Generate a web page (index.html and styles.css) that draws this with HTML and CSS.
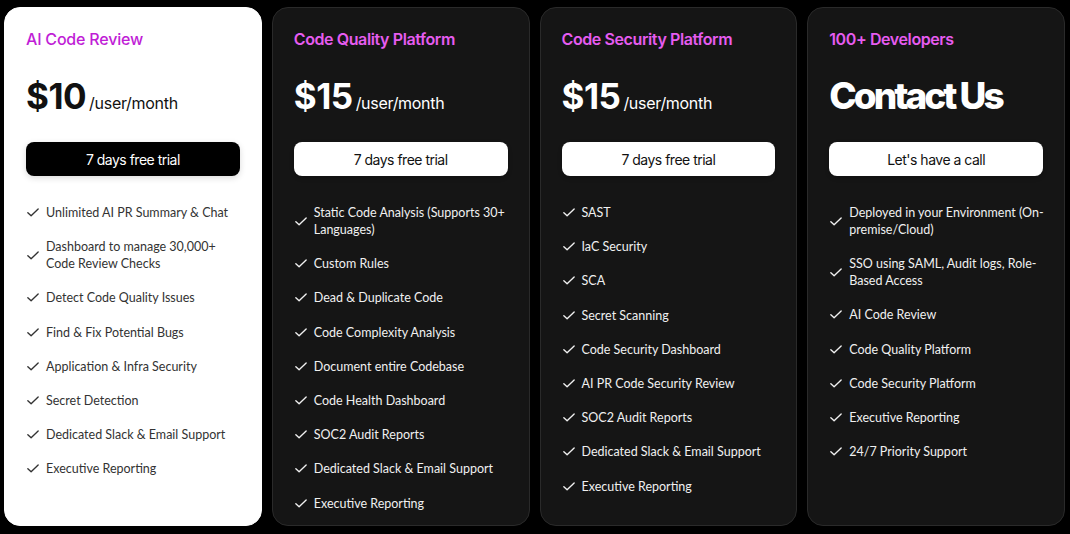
FILE: index.html
```html
<!DOCTYPE html>
<html lang="en">
<head>
    <meta charset="UTF-8">
    <meta name="viewport" content="width=device-width, initial-scale=1.0">
    <title>Pricing</title>
    <link rel="stylesheet" href="styles.css">
</head>
<body>
    <div class="pricing">
        <!-- Plan 1: light card -->
        <div class="plan light">
            <h2 class="plan-name">AI Code Review</h2>
            <div class="price"><span class="amount">$10</span><span class="per">/user/month</span></div>
            <button class="cta">7 days free trial</button>
            <ul class="features">
                <li><svg class="check" viewBox="0 0 14 10"><path d="M1 5.2l3.8 3.6L13 1"/></svg><span>Unlimited AI PR Summary &amp; Chat</span></li>
                <li><svg class="check" viewBox="0 0 14 10"><path d="M1 5.2l3.8 3.6L13 1"/></svg><span>Dashboard to manage 30,000+ Code Review Checks</span></li>
                <li><svg class="check" viewBox="0 0 14 10"><path d="M1 5.2l3.8 3.6L13 1"/></svg><span>Detect Code Quality Issues</span></li>
                <li><svg class="check" viewBox="0 0 14 10"><path d="M1 5.2l3.8 3.6L13 1"/></svg><span>Find &amp; Fix Potential Bugs</span></li>
                <li><svg class="check" viewBox="0 0 14 10"><path d="M1 5.2l3.8 3.6L13 1"/></svg><span>Application &amp; Infra Security</span></li>
                <li><svg class="check" viewBox="0 0 14 10"><path d="M1 5.2l3.8 3.6L13 1"/></svg><span>Secret Detection</span></li>
                <li><svg class="check" viewBox="0 0 14 10"><path d="M1 5.2l3.8 3.6L13 1"/></svg><span>Dedicated Slack &amp; Email Support</span></li>
                <li><svg class="check" viewBox="0 0 14 10"><path d="M1 5.2l3.8 3.6L13 1"/></svg><span>Executive Reporting</span></li>
            </ul>
        </div>

        <!-- Plan 2 -->
        <div class="plan">
            <h2 class="plan-name">Code Quality Platform</h2>
            <div class="price"><span class="amount">$15</span><span class="per">/user/month</span></div>
            <button class="cta">7 days free trial</button>
            <ul class="features">
                <li><svg class="check" viewBox="0 0 14 10"><path d="M1 5.2l3.8 3.6L13 1"/></svg><span>Static Code Analysis (Supports 30+ Languages)</span></li>
                <li><svg class="check" viewBox="0 0 14 10"><path d="M1 5.2l3.8 3.6L13 1"/></svg><span>Custom Rules</span></li>
                <li><svg class="check" viewBox="0 0 14 10"><path d="M1 5.2l3.8 3.6L13 1"/></svg><span>Dead &amp; Duplicate Code</span></li>
                <li><svg class="check" viewBox="0 0 14 10"><path d="M1 5.2l3.8 3.6L13 1"/></svg><span>Code Complexity Analysis</span></li>
                <li><svg class="check" viewBox="0 0 14 10"><path d="M1 5.2l3.8 3.6L13 1"/></svg><span>Document entire Codebase</span></li>
                <li><svg class="check" viewBox="0 0 14 10"><path d="M1 5.2l3.8 3.6L13 1"/></svg><span>Code Health Dashboard</span></li>
                <li><svg class="check" viewBox="0 0 14 10"><path d="M1 5.2l3.8 3.6L13 1"/></svg><span>SOC2 Audit Reports</span></li>
                <li><svg class="check" viewBox="0 0 14 10"><path d="M1 5.2l3.8 3.6L13 1"/></svg><span>Dedicated Slack &amp; Email Support</span></li>
                <li><svg class="check" viewBox="0 0 14 10"><path d="M1 5.2l3.8 3.6L13 1"/></svg><span>Executive Reporting</span></li>
            </ul>
        </div>

        <!-- Plan 3 -->
        <div class="plan">
            <h2 class="plan-name">Code Security Platform</h2>
            <div class="price"><span class="amount">$15</span><span class="per">/user/month</span></div>
            <button class="cta">7 days free trial</button>
            <ul class="features">
                <li><svg class="check" viewBox="0 0 14 10"><path d="M1 5.2l3.8 3.6L13 1"/></svg><span>SAST</span></li>
                <li><svg class="check" viewBox="0 0 14 10"><path d="M1 5.2l3.8 3.6L13 1"/></svg><span>IaC Security</span></li>
                <li><svg class="check" viewBox="0 0 14 10"><path d="M1 5.2l3.8 3.6L13 1"/></svg><span>SCA</span></li>
                <li><svg class="check" viewBox="0 0 14 10"><path d="M1 5.2l3.8 3.6L13 1"/></svg><span>Secret Scanning</span></li>
                <li><svg class="check" viewBox="0 0 14 10"><path d="M1 5.2l3.8 3.6L13 1"/></svg><span>Code Security Dashboard</span></li>
                <li><svg class="check" viewBox="0 0 14 10"><path d="M1 5.2l3.8 3.6L13 1"/></svg><span>AI PR Code Security Review</span></li>
                <li><svg class="check" viewBox="0 0 14 10"><path d="M1 5.2l3.8 3.6L13 1"/></svg><span>SOC2 Audit Reports</span></li>
                <li><svg class="check" viewBox="0 0 14 10"><path d="M1 5.2l3.8 3.6L13 1"/></svg><span>Dedicated Slack &amp; Email Support</span></li>
                <li><svg class="check" viewBox="0 0 14 10"><path d="M1 5.2l3.8 3.6L13 1"/></svg><span>Executive Reporting</span></li>
            </ul>
        </div>

        <!-- Plan 4: enterprise -->
        <div class="plan">
            <h2 class="plan-name">100+ Developers</h2>
            <div class="price"><span class="amount contact">Contact Us</span></div>
            <button class="cta">Let's have a call</button>
            <ul class="features">
                <li><svg class="check" viewBox="0 0 14 10"><path d="M1 5.2l3.8 3.6L13 1"/></svg><span>Deployed in your Environment (On-premise/Cloud)</span></li>
                <li><svg class="check" viewBox="0 0 14 10"><path d="M1 5.2l3.8 3.6L13 1"/></svg><span>SSO using SAML, Audit logs, Role-Based Access</span></li>
                <li><svg class="check" viewBox="0 0 14 10"><path d="M1 5.2l3.8 3.6L13 1"/></svg><span>AI Code Review</span></li>
                <li><svg class="check" viewBox="0 0 14 10"><path d="M1 5.2l3.8 3.6L13 1"/></svg><span>Code Quality Platform</span></li>
                <li><svg class="check" viewBox="0 0 14 10"><path d="M1 5.2l3.8 3.6L13 1"/></svg><span>Code Security Platform</span></li>
                <li><svg class="check" viewBox="0 0 14 10"><path d="M1 5.2l3.8 3.6L13 1"/></svg><span>Executive Reporting</span></li>
                <li><svg class="check" viewBox="0 0 14 10"><path d="M1 5.2l3.8 3.6L13 1"/></svg><span>24/7 Priority Support</span></li>
            </ul>
        </div>
    </div>
</body>
</html>
```

FILE: styles.css
```css
html, body {
    height: 100%;
}

body {
    font-family: Inter, "Noto Sans", Arial, sans-serif;
    margin: 0;
    padding: 7px 5px 8px 4px;
    box-sizing: border-box;
    background-color: #000;
    color: #f0f0f0;
}

.pricing {
    display: grid;
    grid-template-columns: repeat(4, 1fr);
    gap: 10px;
    height: 100%;
}

.plan {
    background-color: #151515;
    border: 1px solid #2a2a2a;
    border-radius: 16px;
    padding: 21px 21px 0 21px;
    display: flex;
    flex-direction: column;
}

.plan.light {
    background-color: #fff;
    border-color: #fff;
    color: #333;
}

.plan-name {
    margin: 0;
    font-size: 16px;
    line-height: 20px;
    font-weight: 600;
    letter-spacing: -0.4px;
    color: #e65cf0;
}

.plan.light .plan-name {
    font-weight: 500;
    letter-spacing: -0.2px;
    color: #c01ed6;
}

.price {
    margin-top: 25px;
    height: 44px;
    display: flex;
    align-items: baseline;
    color: #fff;
}

.plan.light .price {
    color: #111;
}

.amount {
    font-size: 35px;
    line-height: 44px;
    font-weight: 700;
    letter-spacing: -0.5px;
}

.amount.contact {
    font-size: 37px;
    font-weight: 800;
    letter-spacing: -3px;
}

.per {
    font-size: 16px;
    margin-left: 3px;
    font-weight: 400;
    letter-spacing: -0.3px;
}

.cta {
    margin-top: 24px;
    height: 34px;
    width: 100%;
    border: none;
    border-radius: 8px;
    background-color: #fff;
    color: #111;
    font-family: inherit;
    font-size: 14px;
    letter-spacing: -0.5px;
    box-shadow: 0 2px 4px rgba(0,0,0,0.25);
    cursor: pointer;
}

.plan.light .cta {
    background-color: #000;
    color: #fff;
    box-shadow: 0 2px 6px rgba(0,0,0,0.15);
}

.features {
    list-style: none;
    margin: 28px -6px 0 0;
    padding: 0;
    display: flex;
    flex-direction: column;
    gap: 17.2px;
}

.features li {
    display: flex;
    align-items: center;
    font-family: Lato, "Noto Sans", Arial, sans-serif;
    font-size: 12.5px;
    line-height: 17px;
}

.check {
    flex: none;
    width: 12px;
    height: 9px;
    margin: 0 7px 0 1px;
    fill: none;
    stroke: currentColor;
    stroke-width: 1.6;
    stroke-linecap: round;
    stroke-linejoin: round;
}
```
